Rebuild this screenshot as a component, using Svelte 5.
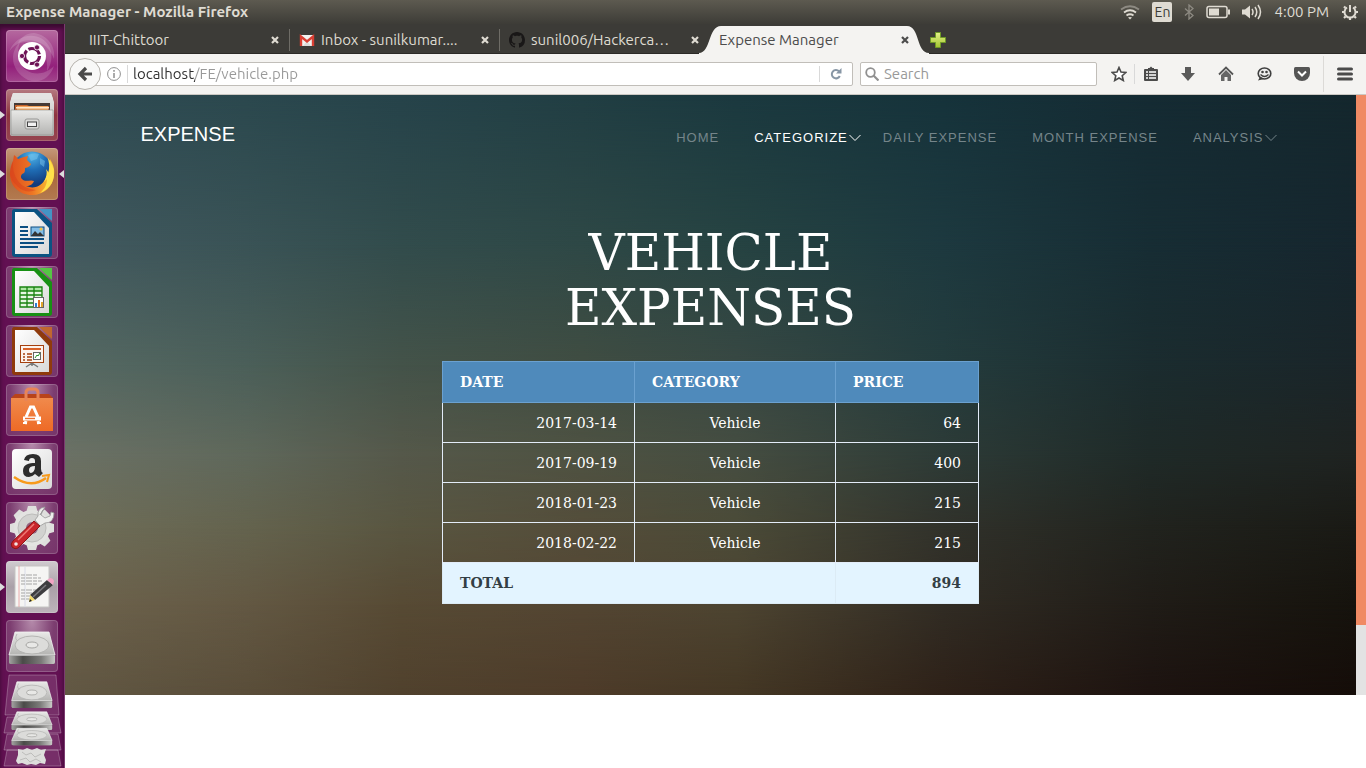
<script>
  const tabs = [
    { title: 'IIIT-Chittoor', icon: '' },
    { title: 'Inbox - sunilkumar....', icon: 'mail' },
    { title: 'sunil006/Hackerca…', icon: 'github' },
    { title: 'Expense Manager', icon: '', active: true }
  ];

  const nav = [
    { label: 'Home' },
    { label: 'Categorize', menu: true, active: true },
    { label: 'Daily expense' },
    { label: 'Month expense' },
    { label: 'Analysis', menu: true }
  ];

  const expenses = [
    { date: '2017-03-14', category: 'Vehicle', price: 64 },
    { date: '2017-09-19', category: 'Vehicle', price: 400 },
    { date: '2018-01-23', category: 'Vehicle', price: 215 },
    { date: '2018-02-22', category: 'Vehicle', price: 215 }
  ];
  const total = expenses.reduce((sum, e) => sum + e.price, 0);

  // Backdrop mesh: one horizontal gradient per row, each row faded in over the one above.
  const stopsX = [0, 14, 26, 40, 52, 68, 84, 100];
  const mesh = [
    { y: 0, c: ['#2f4b53', '#2b484e', '#26434a', '#213e43', '#1b393f', '#16333b', '#152b33', '#14272d'] },
    { y: 25, c: ['#42595f', '#3a5356', '#324c4c', '#2e4846', '#264342', '#1d393f', '#172d34', '#16262e'] },
    { y: 45, c: ['#566963', '#4b5f59', '#445349', '#404d42', '#384843', '#243c3d', '#1b2c2f', '#1a2529'] },
    { y: 60, c: ['#6b7165', '#5f685b', '#55584a', '#4e5242', '#454d41', '#2d3b37', '#1f2a28', '#1f2321'] },
    { y: 72, c: ['#6f6e59', '#64634e', '#595641', '#544d3a', '#4b4b38', '#31322b', '#21231e', '#1a1a15'] },
    { y: 85, c: ['#6d634d', '#635843', '#574a34', '#534532', '#4d4431', '#312c24', '#201c17', '#16130d'] },
    { y: 100, c: ['#615743', '#594d39', '#50412d', '#4d3b29', '#443724', '#2e2118', '#1d1310', '#150d09'] }
  ];
  const layer = (row, i) => {
    const bg = row.c.map((c, k) => `${c} ${stopsX[k]}%`).join(', ');
    const mask = i === 0 ? '' : `mask-image: linear-gradient(to bottom, transparent ${mesh[i - 1].y}%, #000 ${row.y}%)`;
    return `background: linear-gradient(to right, ${bg}); ${mask}`;
  };

  const launchers = [
    { name: 'Dash', icon: 'dash', tint: 'dash' },
    { name: 'Files', icon: 'files', tint: 'red', running: true },
    { name: 'Firefox', icon: 'firefox', tint: 'amber', running: true, focused: true },
    { name: 'Writer', icon: 'writer', tint: 'glass' },
    { name: 'Calc', icon: 'calc', tint: 'glass' },
    { name: 'Impress', icon: 'impress', tint: 'glass' },
    { name: 'Software', icon: 'software', tint: 'glass' },
    { name: 'Amazon', icon: 'amazon', tint: 'glass' },
    { name: 'System Settings', icon: 'settings', tint: 'glass' },
    { name: 'Text Editor', icon: 'editor', tint: 'silver', running: true },
    { name: 'Disk', icon: 'disk', tint: 'glass' }
  ];
</script>

{#snippet drive()}
  <path d="M9 14h34l6 22v6q0 2-2 2H5q-2 0-2-2v-6z" fill="#8b8b89" />
  <path d="M9 12h34l6 23H3z" fill="url(#metal)" stroke="#f2f2f2" stroke-width=".8" />
  <path d="M3 36h46v6q0 2-2 2H5q-2 0-2-2z" fill="url(#edge)" />
  <ellipse cx="26" cy="25" rx="17" ry="9" fill="#dcdcda" stroke="#b5b5b3" />
  <ellipse cx="26" cy="25" rx="6" ry="3" fill="#e8e8e6" stroke="#a5a5a3" />
  <path d="M11 14q-3 5 1 7M38 32l8 1" fill="none" stroke="#b9b9b7" />
{/snippet}

{#snippet office(edge, fold)}
  <path d="M8 2h23l15 14v31q0 3-3 3H9q-3 0-3-3V5q0-3 2-3z" fill={edge} />
  <path d="M9 5h19l15 16v26H9z" fill="url(#paper)" />
  <path d="M33 2h13v12z" fill={fold} />
{/snippet}

{#snippet launcherIcon(icon)}
  <svg viewBox="0 0 52 52" aria-hidden="true">
    {#if icon === 'dash'}
      <g fill="#fff" fill-opacity=".16">
        <path d="M3 22C10 2 36 0 44 18c3 9 1 17-3 23 1-14-3-24-14-28C17 10 8 14 3 22z" />
        <path d="M22 50C6 42 2 24 14 12c-4 12-2 22 6 28 9 6 20 4 28-4-4 12-14 18-26 14z" />
        <path d="M28 3c14 2 22 14 20 26-3-8-8-14-16-17-8-3-14-2-20 1 3-6 9-10 16-10z" />
      </g>
      <circle cx="26" cy="26" r="14" fill="#fff" />
      <circle cx="26" cy="26" r="7.500" fill="none" stroke="#6d1356" stroke-width="3.200" stroke-dasharray="13.700 2" />
      <g fill="#6d1356" stroke="#fff" stroke-width=".8">
        <circle cx="16" cy="26" r="2.600" /><circle cx="31" cy="17.400" r="2.600" /><circle cx="31" cy="34.600" r="2.600" />
      </g>
    {:else if icon === 'files'}
      <path d="M7 4h38l3 9v32q0 2-2 2H6q-2 0-2-2V13z" fill="url(#metal)" />
      <path d="M7 4h38l2 6H5z" fill="#e4e4e2" />
      <path d="M8 14h36v10H8z" fill="#453a35" />
      <path d="M9 16h12l2 1h20v6H9z" fill="#c4622b" />
      <path d="M11 17h31v5H11z" fill="#f3a45c" />
      <path d="M10 18h33v1.500H10z" fill="#fbe7cd" />
      <path d="M5 21h42v23q0 2-2 2H7q-2 0-2-2z" fill="url(#metal)" stroke="#8d8d8b" stroke-width=".6" />
      <rect x="19" y="30" width="14" height="10" rx="2" fill="#d9d9d7" stroke="#979795" />
      <rect x="21.500" y="33" width="9" height="4.500" fill="#f2f2f2" stroke="#444" />
    {:else if icon === 'firefox'}
      <circle cx="26" cy="24" r="20.500" fill="url(#globe)" />
      <path d="M22 7q6-3 11-1l-2 5-6 2zM34 10l5 3-1 6-4-3z" fill="#7cc6ee" opacity=".5" />
      <path d="M44 11c3 5 5 10 4 16-1 12-10 20-22 20C13 47 4 38 4 26c0-5 1-9 3-13l1-6q2 1 4 4 5-2 10-3l-1 4 4 4q-1 3-6 4c0 2 0 4-1 5-3 1-4 4-2 6 4 4 8 0 12 2-1 3-4 5-8 5 7 3 14 1 18-5 4-6 6-13 6-22z" fill="url(#fox)" />
      <path d="M42 10c4 5 6 10 6 16 0 9-6 16-14 19 5-4 7-9 7-14l-3 3q4-8 2-13l3 4q1-8-1-15z" fill="#ffe14a" />
      <path d="M7 13q-1 12 5 20 6 8 18 9-10 4-18-3-8-7-8-15 1-6 3-11z" fill="#d8401c" opacity=".5" />
    {:else if icon === 'writer'}
      {@render office('#0b5382', '#4494c4')}
      <path d="M14 20h8M14 24h8M14 28h8M14 32h24M14 36h24M14 40h18" stroke="#0c4f82" stroke-width="2" />
      <rect x="25" y="20" width="13" height="9" fill="#83bde6" stroke="#0c4f82" />
      <path d="M25 29l4-5 3 3 2-2 4 4z" fill="#333" />
      <circle cx="35" cy="22" r="1.500" fill="#f5c542" />
    {:else if icon === 'calc'}
      {@render office('#189014', '#55c544')}
      <path d="M14 21h22v20H14z" fill="#e7f7e3" />
      <path d="M14 21h22v4H14z" fill="#aee6a4" />
      <path d="M14 21h22v20H14zM14 25h22M14 29h22M14 33h22M14 37h22M21 21v20M28 21v20" fill="none" stroke="#18820f" stroke-width="1.300" />
      <rect x="27.500" y="31.500" width="10" height="10" fill="#fff" stroke="#666" />
      <path d="M29 41v-4h2v4z" fill="#2f7fd1" /><path d="M32 41v-7h2v7z" fill="#e86a17" /><path d="M35 41v-5h2v5z" fill="#e0a52c" />
    {:else if icon === 'impress'}
      {@render office('#8f3a0c', '#c0672f')}
      <rect x="14.500" y="20.500" width="23" height="17" fill="#fdf4ee" stroke="#a5400f" />
      <path d="M17 24h18" stroke="#d8622a" stroke-width="2" />
      <path d="M17 29h2M17 32h2M17 35h2M21 29h5M21 32h5M21 35h5" stroke="#a5400f" stroke-width="1.500" />
      <rect x="27.500" y="27.500" width="7" height="7" fill="#fff" stroke="#666" />
      <path d="M29 33l2-3 1 1 2-3" fill="none" stroke="#279227" />
      <path d="M26 38l-6 4M26 38l6 4M26 38v3" stroke="#777" stroke-width="1.500" />
    {:else if icon === 'software'}
      <path d="M5 14l4-4h34l4 4z" fill="#b8431a" />
      <path d="M5 14h42v33H5z" fill="url(#bag)" />
      <path d="M20 17V9q0-4 4-4h4q4 0 4 4v8" fill="none" stroke="#e88457" stroke-width="3" />
      <path d="M20 33l4.500-10h3L32 33M20 37l-1 3M32 37l1 3" fill="none" stroke="#fff" stroke-width="3" />
      <path d="M17 34.500h18" stroke="#fff" stroke-width="4" />
      <path d="M19 34.500h10" stroke="#ef7030" stroke-width="1.400" />
      <path d="M17 39h4M31 39h4" stroke="#fff" stroke-width="2" />
    {:else if icon === 'amazon'}
      <rect x="6" y="6" width="40" height="40" rx="4" fill="url(#paper)" />
      <path d="M18 17q1-6 9-6 8 0 8 7v8q0 3 2 4l-4 4-4-3q-3 3-6 3-6 0-6-6c0-7 6-8 12-8v-2q0-3-3-3t-3 3z" fill="#2d2d2d" />
      <path d="M29 23q-6 0-6 4 0 3 2 3 4-1 4-7z" fill="#eee" />
      <path d="M8 34q17 12 32 1" fill="none" stroke="#f79a1b" stroke-width="2.500" />
      <path d="M36 33l7-1-2 7" fill="none" stroke="#f79a1b" stroke-width="2" />
    {:else if icon === 'settings'}
      <g transform="translate(26 26)">
        {#each [0, 45, 90, 135, 180, 225, 270, 315] as a}
          <path d="M-6-15l2-7h8l2 7z" transform={`rotate(${a})`} fill="#dfdfdd" />
        {/each}
        <circle r="18" fill="#e3e3e1" />
        <circle r="14" fill="#d2d2d0" stroke="#bdbdbb" />
        <circle r="6" fill="#94617f" />
      </g>
      <path d="M34 13l5-8q-8 1-7 9l-3 4 5 6 5-3q9 0 9-10l-3-1-1 4-5 2-4-3 2-5z" fill="#eeeeec" stroke="#999" stroke-width=".8" />
      <path d="M28 19l6 5-22 22q-3 2-6-1-2-3 1-6z" fill="#c9252b" stroke="#8f1417" />
      <path d="M28 22L12 38" stroke="#ef7b77" stroke-width="1.500" />
      <circle cx="10" cy="42" r="1.800" fill="#f3e4e4" />
    {:else if icon === 'editor'}
      <path d="M9 5h34v41H9z" fill="#f5f5f3" stroke="#c5c5c3" />
      <path d="M13 5v41" stroke="#e79a9a" stroke-width=".8" /><path d="M19 6v40" stroke="#d9dbe8" />
      <path d="M15 14h16M15 17h20M15 20h21M15 23h17M15 29h15M15 32h14M15 35h10M15 38h9" stroke="#a6a6a6" stroke-width="1.200" stroke-dasharray="4 1 6 1" />
      <path d="M41 19l6 5-18 15-5-5z" fill="#3d3d3f" />
      <path d="M40 24L27 36" stroke="#7b7b7e" stroke-width="1.500" />
      <path d="M41 19l3-2q3 0 4 3l-1 4z" fill="#f2a4c4" />
      <path d="M24 34l5 5-6 2z" fill="#f5dc6a" /><path d="M23 41l1-3 2 2z" fill="#222" />
    {:else if icon === 'disk'}
      {@render drive()}
    {/if}
  </svg>
{/snippet}

<svg class="defs" aria-hidden="true">
  <defs>
    <linearGradient id="metal" x2="0" y2="1"><stop stop-color="#e9e9e7" /><stop offset="1" stop-color="#b4b4b2" /></linearGradient>
    <linearGradient id="edge"><stop stop-color="#a3a3a1" /><stop offset=".3" stop-color="#4a4a48" /><stop offset=".7" stop-color="#7b7b79" /><stop offset="1" stop-color="#c9c9c7" /></linearGradient>
    <linearGradient id="paper" x2="1" y2="1"><stop stop-color="#fff" /><stop offset="1" stop-color="#d9d9d9" /></linearGradient>
    <linearGradient id="bag" x2="0" y2="1"><stop stop-color="#f08a4c" /><stop offset="1" stop-color="#ee6a26" /></linearGradient>
    <linearGradient id="fox" x1="0" y1="0" x2="1" y2="0"><stop stop-color="#dd4f1e" /><stop offset=".5" stop-color="#ee7524" /><stop offset="1" stop-color="#fbd038" /></linearGradient>
    <radialGradient id="globe" cx=".5" cy=".1" r=".7"><stop stop-color="#4fb4e8" /><stop offset=".5" stop-color="#1f6db5" /><stop offset="1" stop-color="#123c7c" /></radialGradient>
    <linearGradient id="plus" x2="0" y2="1"><stop stop-color="#e3f089" /><stop offset="1" stop-color="#a3c52f" /></linearGradient>
  </defs>
</svg>

<div class="desktop">
  <header class="panel">
    <span class="title">Expense Manager - Mozilla Firefox</span>
    <div class="tray">
      <svg viewBox="0 0 20 16" width="20" height="16" aria-hidden="true">
        <g fill="none" stroke-width="1.800"><path d="M1 5.500Q10-1 19 5.500" stroke="#8d8a82" /><path d="M4 8.500q6-4.500 12 0M6.500 11.500q3.500-2.500 7 0" stroke="#dfdbd2" /></g>
        <path d="M8 13.500q2-1 4 0l-2 2z" fill="#dfdbd2" />
      </svg>
      <span class="lang">En</span>
      <svg viewBox="0 0 10 16" width="10" height="16" aria-hidden="true"><path d="M1 4.500l8 7-4 3.500V1l4 3.500-8 7" fill="none" stroke="#8d8a82" stroke-width="1.300" /></svg>
      <svg viewBox="0 0 24 14" width="24" height="14" aria-hidden="true"><rect x="1" y="1.500" width="20" height="11" rx="2" fill="none" stroke="#dfdbd2" stroke-width="1.500" /><path d="M3 3.500h10v7H3zM22 4.500h2v5h-2z" fill="#dfdbd2" /></svg>
      <svg viewBox="0 0 20 16" width="20" height="16" aria-hidden="true"><path d="M0 5.500h3l5-4v13l-5-4H0z" fill="#dfdbd2" /><path d="M10 5q2 3 0 6M13 3q3.500 5 0 10M16 1q5 7 0 14" fill="none" stroke="#dfdbd2" stroke-width="1.500" /></svg>
      <time>4:00 PM</time>
      <svg viewBox="0 0 18 18" width="18" height="18" aria-hidden="true">
        <path d="M6 4.500a5.500 5.500 0 1 0 6 0M9 2v7" fill="none" stroke="#dfdbd2" stroke-width="2" />
        <path d="M1 9h2M15 9h2M3 3.500l1.500 1.500M13.500 13.500l1.500 1.500M15 3.500l-1.500 1.500M3 15l1.500-1.500M9 15v2" stroke="#dfdbd2" stroke-width="2.200" />
      </svg>
    </div>
  </header>

  <div class="workspace">
    <nav class="launcher" aria-label="Launcher">
      {#each launchers as l}
        <button class="tile {l.tint}" class:running={l.running} class:focused={l.focused} aria-label={l.name}>
          {@render launcherIcon(l.icon)}
        </button>
      {/each}
      <svg class="pile" viewBox="0 0 65 94" width="65" height="94" aria-hidden="true">
        <g fill="#fff" fill-opacity=".13" stroke="#fff" stroke-opacity=".25">
          <path d="M7 76h51l3 16H4zM7 60h51l3 16H4zM7 43h51l3 16H4z" />
          <path d="M9 1h47l3 40H5z" />
        </g>
        <g transform="translate(9 -2) scale(.88 .82)">{@render drive()}</g>
        <g transform="translate(9 31) scale(.88 .57)">{@render drive()}</g>
        <g transform="translate(9 48) scale(.88 .53)">{@render drive()}</g>
        <path d="M18 75l5 1 4-2 5 2 5-2 4 2 5-1-2 6 2 5-1 4-5-1-4 2-5-1-4 1-5-2-4 1-2-3 2-6z" fill="#dededc" />
        <path d="M22 78l4 3 5-2 4 4 6-3M20 86l6-2 4 4 6-3 5 3" fill="none" stroke="#bdbdbb" />
      </svg>
    </nav>

    <div class="browser">
      <div class="tabs">
        {#each tabs as tab}
          <div class="tab" class:active={tab.active}>
            {#if tab.active}
              <svg class="tabshape" viewBox="0 0 230 30" preserveAspectRatio="none" aria-hidden="true">
                <path d="M0 29C12 29 9 2 22 2h186c13 0 9 27 22 27v2H0z" fill="#f4f3f1" />
              </svg>
            {/if}
            {#if tab.icon === 'mail'}
              <svg class="favicon" viewBox="0 0 16 16" width="16" height="16" aria-hidden="true">
                <path d="M1 3h14v11H1z" fill="#f2f2f0" /><path d="M4 14l4-5 4 5z" fill="#dcdcda" />
                <path d="M2 14V4.500l6 5 6-5V14" fill="none" stroke="#d93f33" stroke-width="2.400" />
              </svg>
            {:else if tab.icon === 'github'}
              <svg class="favicon" viewBox="0 0 16 16" width="16" height="16" aria-hidden="true">
                <path fill="#191717" fill-rule="evenodd" d="M8 0C3.580 0 0 3.580 0 8c0 3.540 2.290 6.530 5.470 7.590.4.070.55-.17.55-.38 0-.19-.01-.82-.01-1.490-2.010.37-2.530-.49-2.690-.94-.09-.23-.48-.94-.82-1.130-.28-.15-.68-.52-.01-.53.63-.01 1.080.58 1.230.82.72 1.210 1.870.87 2.330.66.07-.52.28-.87.51-1.070-1.780-.2-3.640-.89-3.640-3.950 0-.87.31-1.590.82-2.150-.08-.2-.36-1.020.08-2.120 0 0 .67-.21 2.200.82.64-.18 1.320-.27 2-.27s1.360.09 2 .27c1.530-1.040 2.200-.82 2.200-.82.44 1.100.16 1.920.08 2.120.51.56.82 1.270.82 2.150 0 3.070-1.870 3.750-3.650 3.950.29.25.54.73.54 1.480 0 1.070-.01 1.930-.01 2.200 0 .21.15.46.55.38A8.010 8.010 0 0 0 16 8c0-4.420-3.580-8-8-8z" />
              </svg>
            {/if}
            <a class="tabtitle" href="#tab">{tab.title}</a>
            <button class="close" aria-label="Close tab">
              <svg viewBox="0 0 8 8" width="8" height="8" aria-hidden="true"><path d="M1 1l6 6M7 1L1 7" stroke="currentColor" stroke-width="2.200" /></svg>
            </button>
          </div>
        {/each}
        <button class="newtab" aria-label="New tab">
          <svg viewBox="0 0 16 16" width="16" height="16" aria-hidden="true"><path d="M5.500.500h5v5h5v5h-5v5h-5v-5h-5v-5h5z" fill="url(#plus)" stroke="#6f9a26" /></svg>
        </button>
      </div>

      <div class="toolbar">
        <button class="back" aria-label="Back">
          <svg viewBox="0 0 16 16" width="16" height="16" aria-hidden="true"><path d="M9 2L3 8l6 6M3 8h12" fill="none" stroke="#4a4a4a" stroke-width="3.200" /></svg>
        </button>
        <div class="urlbar">
          <svg viewBox="0 0 14 14" width="14" height="14" aria-hidden="true"><circle cx="7" cy="7" r="6.400" fill="none" stroke="#8f8f8f" /><path d="M7 6v5M7 3v1.800" stroke="#8f8f8f" stroke-width="1.500" /></svg>
          <input class="url" aria-label="Address" value="localhost/FE/vehicle.php" />
          <button class="reload" aria-label="Reload">
            <svg viewBox="0 0 12 12" width="12" height="12" aria-hidden="true"><path d="M9 3.200A4.200 4.200 0 1 0 9.800 8" fill="none" stroke="#8796a5" stroke-width="2" /><path d="M11.500 0v5.500H6z" fill="#8796a5" /></svg>
          </button>
        </div>
        <div class="searchbar">
          <svg viewBox="0 0 14 14" width="14" height="14" aria-hidden="true"><circle cx="5.500" cy="5.500" r="4.300" fill="none" stroke="#909090" stroke-width="1.800" /><path d="M8.500 8.500l5 5" stroke="#909090" stroke-width="2.200" /></svg>
          <input aria-label="Search" placeholder="Search" />
        </div>
        <div class="actions">
          <button class="first" aria-label="Bookmark">
            <svg viewBox="0 0 16 16" width="16" height="16" aria-hidden="true"><path d="M8 1.500l2 4.500 4.800.500-3.600 3.200 1.100 4.800L8 12l-4.300 2.500 1.100-4.800L1.200 6.500 6 6z" fill="#fff" stroke="#4b4b4b" stroke-width="1.600" /></svg>
          </button>
          <button class="list" aria-label="Bookmarks list">
            <svg viewBox="0 0 16 16" width="16" height="16" aria-hidden="true"><path d="M1 4q0-1 1-1h3V2h1.500L8 .500 9.500 2H11v1h3q1 0 1 1v10q0 1-1 1H2q-1 0-1-1z" fill="#4b4b4b" /><path d="M3 6h2M3 9h2M3 12h2M6 6h7M6 9h7M6 12h7" stroke="#fff" stroke-width="1.700" /></svg>
          </button>
          <button aria-label="Downloads">
            <svg viewBox="0 0 16 16" width="16" height="16" aria-hidden="true"><path d="M5 1h6v6h4l-7 8-7-8h4z" fill="#5a5a5a" /></svg>
          </button>
          <button aria-label="Home">
            <svg viewBox="0 0 16 16" width="16" height="16" aria-hidden="true"><path d="M1 8.500l7-7 7 7" fill="none" stroke="#555" stroke-width="1.800" /><path d="M3 9l5-5 5 5v6H9.500v-4h-3v4H3z" fill="#666" /></svg>
          </button>
          <button aria-label="Chat">
            <svg viewBox="0 0 16 16" width="16" height="16" aria-hidden="true"><ellipse cx="8.500" cy="7.500" rx="6.300" ry="5.500" fill="#eee" stroke="#3f3f3f" stroke-width="1.600" /><path d="M4 11l-2 3.500L8 13" fill="#3f3f3f" /><path d="M4.500 8.500q4 4 8 0" fill="none" stroke="#3f3f3f" stroke-width="1.300" /><circle cx="6.500" cy="6" r="1.300" fill="#3f3f3f" /><circle cx="10.500" cy="6" r="1.300" fill="#3f3f3f" /></svg>
          </button>
          <button aria-label="Pocket">
            <svg viewBox="0 0 16 16" width="16" height="16" aria-hidden="true"><path d="M1.500 1h13q1.500 0 1.500 1.500V7a8 8 0 0 1-16 0V2.500Q0 1 1.500 1z" fill="#555" /><path d="M4 5.500L8 9.500l4-4" fill="none" stroke="#fff" stroke-width="2" /></svg>
          </button>
          <button class="menu" aria-label="Menu">
            <svg viewBox="0 0 16 16" width="16" height="16" aria-hidden="true"><path d="M1.500 3h13M1.500 8h13M1.500 13h13" stroke="#4b4b4b" stroke-width="3" stroke-linecap="round" /></svg>
          </button>
        </div>
      </div>

      <div class="page">
        <main class="hero">
          <div class="backdrop" aria-hidden="true">
            {#each mesh as row, i}<div style={layer(row, i)}></div>{/each}
          </div>
          <div class="container">
            <div class="masthead">
              <a class="brand" href="#home">EXPENSE</a>
              <nav class="menu-list" aria-label="Main">
                {#each nav as item}
                  <a href="#nav" class:active={item.active}>
                    {item.label}
                    {#if item.menu}<svg class="chev" viewBox="0 0 12 8" width="12" height="8" aria-hidden="true"><path d="M.500 1L6 6.500 11.500 1" fill="none" stroke="currentColor" /></svg>{/if}
                  </a>
                {/each}
              </nav>
            </div>
            <h1>Vehicle Expenses</h1>
            <table>
              <colgroup><col class="c-date" /><col class="c-cat" /><col class="c-price" /></colgroup>
              <thead><tr><th>DATE</th><th>CATEGORY</th><th>PRICE</th></tr></thead>
              <tbody>
                {#each expenses as e}
                  <tr><td class="num">{e.date}</td><td>{e.category}</td><td class="num">{e.price}</td></tr>
                {/each}
              </tbody>
              <tfoot><tr><th colspan="2">TOTAL</th><td class="num">{total}</td></tr></tfoot>
            </table>
          </div>
        </main>
        <div class="scrolltrack" aria-hidden="true"><div class="thumb"></div></div>
      </div>
    </div>
  </div>
</div>

<style>
  :global(body) { margin: 0; background: #fff; }
  * { box-sizing: border-box; }
  button { border: 0; padding: 0; background: none; color: inherit; font: inherit; display: flex; align-items: center; justify-content: center; }
  a { color: inherit; text-decoration: none; }
  svg { display: block; flex: none; }
  .defs { position: absolute; width: 0; height: 0; }

  .desktop { min-height: 100vh; display: flex; flex-direction: column; font: 15px/20px Ubuntu, "Open Sans", sans-serif; }
  .panel { height: 24px; padding: 0 7px 0 6px; display: flex; align-items: center; justify-content: space-between; background: linear-gradient(#5d5a50, #3d3c37); color: #dfdbd2; }
  .title { font-weight: 700; }
  .tray { display: flex; align-items: center; gap: 12px; }
  .lang { width: 20px; height: 20px; border-radius: 2px; background: #dfdbd2; color: #3c3b37; font-size: 14px; text-align: center; }

  .workspace { flex: 1; display: flex; }
  .launcher { width: 65px; flex: none; height: calc(100vh - 24px); overflow: hidden; padding-top: 6px; display: flex; flex-direction: column; gap: 7px; background: #621052; border-right: 1px solid #7c3a70; box-shadow: inset 0 4px 4px #3a0a30; }
  .tile { position: relative; width: 52px; height: 52px; flex: none; margin-left: 6px; border-radius: 4px; box-shadow: inset 0 0 0 1px rgb(255 255 255 / .18); }
  .tile svg { width: 52px; height: 52px; }
  .glass { background: radial-gradient(ellipse at 50% 0, #b58bab, #7c3d70 60%, #76346a); }
  .dash { background: linear-gradient(#b5699f, #93207b 70%, #a2458c); }
  .red { background: linear-gradient(#b57a80, #8e3440 50%, #964550); }
  .amber { background: linear-gradient(#c4987a, #a9683b 50%, #b37a50); }
  .silver { background: linear-gradient(#d0cbcf, #aaa0a8 50%, #bdb5bb); }
  .running::before, .focused::after { content: ""; position: absolute; top: 22px; border: 4px solid transparent; }
  .running::before { left: -6px; border-left: 5px solid #ddd; border-right: 0; }
  .focused::after { right: -6px; border-right: 5px solid #ddd; border-left: 0; }
  .pile { margin-top: -5px; }

  .browser { flex: 1; min-width: 0; display: flex; flex-direction: column; }
  .tabs { height: 30px; padding-left: 14px; display: flex; background: #3c3b37; color: #dfdbd2; border-bottom: 1px solid #2b2a27; }
  .tab { position: relative; flex: 0 1 210px; min-width: 0; padding: 2px 10px 0; display: flex; align-items: center; }
  .tab:nth-child(-n+2)::after { content: ""; position: absolute; right: -1px; top: 5px; bottom: 2px; border-right: 1px solid #6e6c66; }
  .tab > * { position: relative; }
  .favicon { margin-right: 6px; }
  .tabtitle { flex: 1; min-width: 0; overflow: hidden; white-space: nowrap; }
  .close { width: 8px; height: 20px; }
  .active.tab { color: #4c4c4c; }
  .tab .tabshape { position: absolute; left: -10px; top: 0; width: 230px; height: 30px; }
  .newtab { width: 16px; margin: 2px 0 0 11px; }

  .toolbar { height: 41px; padding-left: 4px; display: flex; align-items: center; background: #f4f3f1; border-bottom: 1px solid #cbc8c3; }
  .back { position: relative; z-index: 1; width: 32px; height: 32px; flex: none; border: 1px solid #b5b2ac; border-radius: 50%; background: #f8f8f7; }
  .urlbar, .searchbar { height: 24px; display: flex; align-items: center; background: #fff; border: 1px solid #c1beb9; border-radius: 2px; min-width: 0; }
  .urlbar { flex: 1; margin-left: -20px; padding-left: 25px; gap: 6px; }
  input { flex: 1; min-width: 0; width: 100%; height: 18px; border: 0; padding: 0; outline: 0; background: none; color: #333; font: inherit; }
  .url { border-left: 1px solid #d9d9d9; padding-left: 5px; }
  .url { background: linear-gradient(to right, #2e2e2e 67px, #999 67px) text; color: transparent; }
  .reload { width: 33px; height: 16px; border-left: 1px solid #d9d9d9; }
  .searchbar { width: 237px; margin-left: 7px; padding-left: 4px; gap: 5px; }
  ::placeholder { color: #999; opacity: 1; }
  .actions { display: flex; margin-left: 7px; }
  .actions button { width: 38px; height: 20px; }
  .actions .first { width: 31px; border-right: 1px solid #d9d9d9; }
  .actions .list { width: 34px; padding-right: 2px; }
  .actions .menu { width: 43px; height: 36px; margin: -8px 0 -8px 2px; border-left: 1px solid #dcdad7; }

  .page { flex: 1; display: flex; align-items: flex-start; background: #fff; }
  .hero { position: relative; flex: 1; min-width: 0; padding-bottom: 91px; color: #fff; }
  .backdrop, .backdrop div { position: absolute; inset: 0; }
  .container { position: relative; max-width: 1140px; margin: 0 auto; }
  .masthead { display: flex; justify-content: space-between; padding-top: 29px; font-family: "Liberation Sans", Arial, sans-serif; line-height: 20px; }
  .brand { font-size: 20px; }
  .menu-list { display: flex; padding-top: 4px; font-size: 13px; letter-spacing: 1px; text-transform: uppercase; color: #75858a; }
  .menu-list a { position: relative; padding: 0 17px 0 18px; }
  .menu-list .active { color: #fff; }
  .chev { position: absolute; right: 4px; top: 6px; }
  h1 { width: 400px; max-width: 100%; margin: 78px auto 25px; font: 400 50px/55px "DejaVu Serif", serif; text-align: center; text-transform: uppercase; }
  table { width: 537px; max-width: 100%; margin: 0 auto; border-collapse: collapse; table-layout: fixed; font: 14px/20px "DejaVu Serif", serif; }
  .c-date { width: 192px; }
  .c-cat { width: 201px; }
  th, td { height: 40px; padding: 0 17px; border: 1px solid #e3ecf8; }
  th { text-align: left; font-weight: 700; }
  td { text-align: center; }
  .num { text-align: right; }
  thead th { height: 41px; background: #4f8abb; border-color: #6ba1d0; }
  tfoot th, tfoot td { height: 41px; background: #e3f4ff; color: #333f45; border-color: #dcebf5; font-weight: 700; }
  .scrolltrack { align-self: flex-start; width: 10px; height: 600px; background: #e3e3e3; }
  .thumb { height: 530px; background: #f08a64; }
</style>
